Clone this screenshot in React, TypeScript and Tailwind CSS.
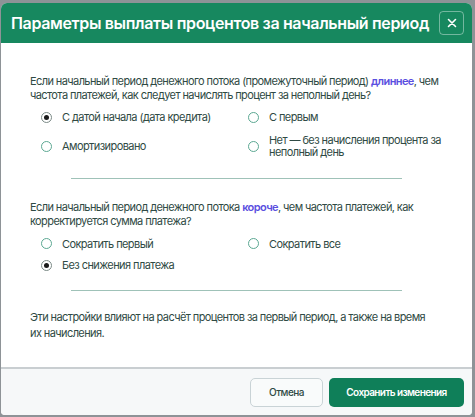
import React, { useState } from "react";

function Radio({ checked, onClick, children }: { checked: boolean; onClick: () => void; children: React.ReactNode }) {
  return (
    <button type="button" onClick={onClick} className="flex items-center gap-[10px] text-left">
      <span
        className={
          "flex h-[11px] w-[11px] shrink-0 items-center justify-center rounded-full border " +
          (checked ? "border-[#7b8a86]" : "border-[#5ba892]")
        }
      >
        {checked && <span className="h-[5px] w-[5px] rounded-full bg-[#1a1a1a]" />}
      </span>
      <span className="text-[11px] leading-[12.5px] tracking-[-0.58px] text-[#2f4a44]">{children}</span>
    </button>
  );
}

export default function App() {
  const [a, setA] = useState(0);
  const [b, setB] = useState(2);
  return (
    <div
      className="h-[417px] w-[475px] overflow-hidden bg-[#8e9397] pt-[3px] pl-[1px] pr-[3px]"
      style={{ fontFamily: "Inter, 'Noto Sans', sans-serif" }}
    >
      <div className="flex h-[412px] w-[471px] flex-col overflow-hidden rounded-t-[6px] rounded-b-[4px] bg-white">
        <div className="flex h-[40px] shrink-0 items-center justify-between bg-[#17885f] pl-[10px] pr-[8px]">
          <h1 className="whitespace-nowrap text-[16px] font-semibold tracking-[-0.35px] text-white">
            Параметры выплаты процентов за начальный период
          </h1>
          <button
            type="button"
            className="flex h-[24px] w-[25px] items-center justify-center rounded-[4px] border border-white/40 text-white"
          >
            <svg width="10" height="10" viewBox="0 0 10 10" fill="none" stroke="currentColor" strokeWidth="1.6" strokeLinecap="round">
              <path d="M1.5 1.5l7 7M8.5 1.5l-7 7" />
            </svg>
          </button>
        </div>

        <div className="flex flex-1 flex-col px-[29px] pt-[31px]">
          <p className="text-[11px] leading-[14px] tracking-[-0.6px] text-[#2f4a44]">
            Если начальный период денежного потока (промежуточный период){" "}
            <span className="font-semibold text-[#5a4fe0]">длиннее</span>, чем частота платежей, как следует начислять
            процент за неполный день?
          </p>
          <div className="mt-[9px] grid grid-cols-[207px_1fr] items-center gap-y-[10px] pl-[11px]">
            <Radio checked={a === 0} onClick={() => setA(0)}>С датой начала (дата кредита)</Radio>
            <Radio checked={a === 1} onClick={() => setA(1)}>С первым</Radio>
            <Radio checked={a === 2} onClick={() => setA(2)}>Амортизировано</Radio>
            <Radio checked={a === 3} onClick={() => setA(3)}>
              Нет — без начисления процента за неполный день
            </Radio>
          </div>
          <div className="mx-auto mt-[19px] h-px w-[331px] bg-[#9fc2b8]" />

          <p className="mt-[21px] text-[11px] leading-[14px] tracking-[-0.6px] text-[#2f4a44]">
            Если начальный период денежного потока <span className="font-semibold text-[#5a4fe0]">короче</span>, чем
            частота платежей, как корректируется сумма платежа?
          </p>
          <div className="mt-[10px] grid grid-cols-[207px_1fr] items-center gap-y-[9px] pl-[11px]">
            <Radio checked={b === 0} onClick={() => setB(0)}>Сократить первый</Radio>
            <Radio checked={b === 1} onClick={() => setB(1)}>Сократить все</Radio>
            <Radio checked={b === 2} onClick={() => setB(2)}>Без снижения платежа</Radio>
          </div>
          <div className="mx-auto mt-[18px] h-px w-[331px] bg-[#9fc2b8]" />

          <p className="mt-[18px] pr-[8px] text-[11px] leading-[16.5px] tracking-[-0.6px] text-[#2f4a44]">
            Эти настройки влияют на расчёт процентов за первый период, а также на время их начисления.
          </p>
        </div>

        <div className="flex h-[48px] shrink-0 items-center justify-end gap-[6px] border-t-2 border-[#c9ced1] bg-[#f6f8f9] pr-[8px]">
          <button
            type="button"
            className="h-[29px] w-[73px] rounded-[5px] border border-[#c9d3d6] bg-[#f9fbfb] text-[10px] font-medium tracking-[-0.5px] text-[#2f4a44]"
          >
            Отмена
          </button>
          <button
            type="button"
            className="h-[29px] w-[135px] rounded-[5px] bg-[#0f7f59] text-[10px] font-semibold tracking-[-0.6px] text-white"
          >
            Сохранить изменения
          </button>
        </div>
      </div>
    </div>
  );
}
